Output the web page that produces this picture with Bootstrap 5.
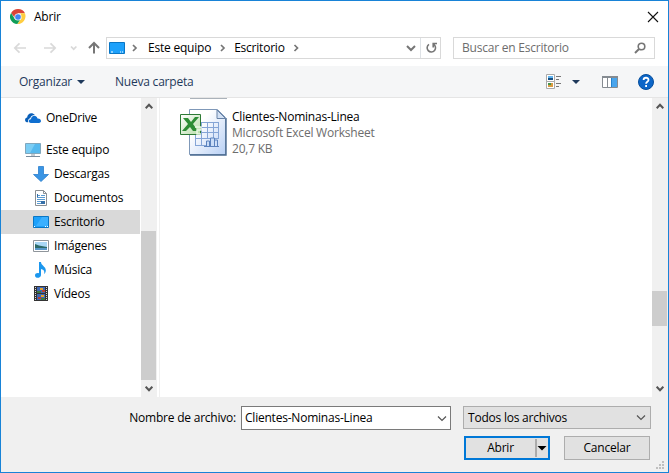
<!DOCTYPE html>
<html lang="es">
<head>
<meta charset="utf-8">
<meta name="viewport" content="width=device-width, initial-scale=1">
<title>Abrir</title>
<link href="https://cdn.jsdelivr.net/npm/bootstrap@5.3.0/dist/css/bootstrap.min.css" rel="stylesheet">
<style>
body{font-family:"Open Sans","Noto Sans",sans-serif;font-size:12px;line-height:16px;letter-spacing:-.22px;color:#000;white-space:nowrap}
svg{display:block;flex:none}
.dialog{width:669px;height:473px;border:1px solid #1883d7;background:#fff}
.titlebar{height:31px;padding:0 9px 0 9px}
.address{height:33px;padding:5px 12px 0 12px}
.box{height:22px;border:1px solid #d9d9d9}
.path-box{width:335px;margin-left:6px}
.search-box{width:202px;margin-left:12px;color:#6d6d6d}
.commands{height:32px;background:#f5f6f7;border-bottom:1px solid #e5e5e5;color:#1e395b;margin-top:1px;padding-left:18px;padding-right:14px}
.panes{height:299px}
.tree{width:140px;padding-top:8px}
.tree-item{height:24px;padding-left:32px;gap:5px}
.tree-item.top{padding-left:24px}
.tree-item.selected{background:#d9d9d9;width:139px}
.scroll{width:16px;background:#f0f0f0}
.thumb{background:#cdcdcd;width:15px}
.arrow{height:17px;padding:5px 0 0 4px}
.files{border-left:1px solid #f0f0f0;margin-left:2px}
.file{margin:10px 0 0 20px;gap:5px}
.above{height:1px;width:37px;margin-left:30px;background:#aab2ba}
.meta{color:#6d6d6d}
.foot{background:#f0f0f0;padding:9px 17px 0 0}
.name-field{width:210px;height:24px;background:#fff;border:1px solid #7a7a7a;margin-left:5px;padding:0 3px}
.type-field{width:188px;height:23px;background:#e1e1e1;border:1px solid #adadad;margin-left:12px;padding:0 4px}
.push{height:24px;width:86px;background:#e1e1e1;border:1px solid #adadad}
.push.main{border:2px solid #0078d7}
.grip{right:3px;bottom:2px}
</style>
</head>
<body>
<div class="dialog d-flex flex-column position-relative overflow-hidden">
  <header class="titlebar d-flex align-items-center">
    <svg width="16" height="16" viewBox="0 0 16 16"><path d="M1.1 4A8 8 0 0 1 15 4.2H8L5 9Z" fill="#db4437"/><path d="M15 4.2A8 8 0 0 1 7.3 15L11.3 9.5 10.5 4.2Z" fill="#ffcd40"/><path d="M1.1 4 5 10.2 10.3 10.6 7.3 15A7.2 7.2 0 0 1 1.1 4Z" fill="#0f9d58"/><circle cx="8" cy="8" r="3.6" fill="#f1f1f1"/><circle cx="8" cy="8" r="2.8" fill="#4285f4"/></svg>
    <span class="t-title ms-1 ps-1">Abrir</span>
    <svg class="ms-auto" width="12" height="12" viewBox="0 0 12 12" stroke="#111" stroke-width="1.1"><path d="M1 1 11 11M11 1 1 11"/></svg>
  </header>

  <div class="address d-flex">
    <svg width="82" height="22" viewBox="0 0 82 22" fill="none"><g stroke="#d9d9d9" stroke-width="1.7"><path d="M13 11H2M6.5 6.3 1.8 11 6.5 15.7M31 11H42M37.5 6.3 42.2 11 37.5 15.7"/><path d="m58 9.5 2.7 2.7 2.7-2.7"/></g><path d="M81 16.5V6M75.8 11.2 81 6 86.2 11.2" stroke="#767676" stroke-width="2" class="d-none"/></svg>
    <svg width="12" height="22" viewBox="0 0 12 22" style="margin-left:-7px" fill="none" stroke="#767676" stroke-width="2"><path d="M6 16.5V6M1 11 6 6 11 11"/></svg>
    <div class="box path-box d-flex align-items-center">
      <svg class="ms-1" style="margin-left:2px!important" width="16" height="12" viewBox="0 0 16 12"><path d="M.5.5h15v11H.5z" fill="#1da1fb" stroke="#0a76c4"/><path d="M2 10h2m7 0h1m1 0h1" stroke="#fff"/></svg>
      <svg class="sep1" width="23" height="10" viewBox="0 0 23 10" fill="none" stroke="#767676" stroke-width="1.7"><path d="m8 2 3 3-3 3"/></svg>
      <span class="t-pc">Este equipo</span>
      <svg width="23" height="10" viewBox="0 0 23 10" fill="none" stroke="#767676" stroke-width="1.7"><path d="m10 2 3 3-3 3"/></svg>
      <span class="t-esc">Escritorio</span>
      <svg width="23" height="10" viewBox="0 0 23 10" fill="none" stroke="#767676" stroke-width="1.7"><path d="m9.500 2 3 3-3 3"/></svg>
      <svg class="ms-auto me-1" width="10" height="8" viewBox="0 0 10 8" fill="none" stroke="#767676" stroke-width="2"><path d="m1 2 4 4 4-4"/></svg>
      <div class="border-start h-100 d-flex align-items-center ps-1"><svg width="15" height="14" viewBox="0 0 15 14" fill="none" stroke="#767676" stroke-width="1.6"><path d="M4 3.300A4.200 4.200 0 1 0 8.500 3.200M8.200 6.500V2.500H12"/></svg></div>
    </div>
    <div class="box search-box d-flex align-items-center ps-2">
      <span class="t-search">Buscar en Escritorio</span>
      <svg class="ms-auto me-2" width="12" height="12" viewBox="0 0 12 12" fill="none" stroke="#767676"><circle cx="7.500" cy="4.500" r="3.300" stroke-width="1.600"/><path d="M5 7 1 11" stroke-width="2"/></svg>
    </div>
  </div>

  <nav class="commands d-flex align-items-center">
    <span class="t-org">Organizar</span>
    <svg class="ms-1" width="10" height="6" viewBox="0 0 10 6"><path d="M1 1h8L5 5Z" fill="#1e395b"/></svg>
    <span class="t-new">Nueva carpeta</span>
    <svg class="ms-auto" width="16" height="16" viewBox="0 0 16 16"><g fill="#fff" stroke="#aaa"><path d="M.5.5h8v7h-8zM.5 7.500h8v7h-8z"/></g><path d="M2 2h5v2H2z" fill="#60b4f0"/><path d="M2 4h5v2H2z" fill="#184f80"/><path d="M2 9h5v4H2z" fill="#d99b41"/><path d="M2 9h3v2H2z" fill="#44944d"/><path d="M10 2.500h5M10 5.500h3M10 9.500h5M10 12.500h3" stroke="#777"/></svg>
    <svg width="10" height="6" viewBox="0 0 10 6" class="view-caret"><path d="M1 1h8L5 5Z" fill="#1e395b"/></svg>
    <svg class="preview" width="16" height="12" viewBox="0 0 16 12"><path d="M.5.5h15v11H.5z" fill="#fff" stroke="#858b91"/><path d="M0 0h16v2H0z" fill="#858b91"/><path d="M5.500 2v9" stroke="#858b91"/><path d="M9 2h6v9H9z" fill="#49a5ec"/><path d="M9.500 2v9" stroke="#2482cf"/></svg>
    <svg class="help" width="16" height="16" viewBox="0 0 16 16"><circle cx="8" cy="8" r="7.500" fill="#0c66c8" stroke="#074f9c"/><path d="M5.600 6C5.600 3 10.500 3 10.500 5.900 10.500 7.800 8.100 7.800 8.100 9.700M8.100 11v1.900" fill="none" stroke="#fff" stroke-width="1.800"/></svg>
  </nav>

  <main class="panes d-flex">
    <div class="tree">
      <div class="tree-item top d-flex align-items-center mb-2">
        <svg width="16" height="16" viewBox="0 0 16 16"><path d="M3.300 12.300C-.8 12.500-.8 8 2.200 7.600 2 3.400 7.200 1.500 9.800 5 7 5 5.500 6.500 5.300 8.300 3.500 8.500 2.500 10.500 3.300 12.300Z" fill="#0a5fb8"/><path d="M6 13C2.500 12.600 3.500 9 6 9.300 6.200 5 11.500 4.500 12.500 8.500 16.700 8.300 17 13 14 13Z" fill="#0f6fd0"/></svg>
        <span class="t-one">OneDrive</span></div>
      <div class="tree-item top d-flex align-items-center">
        <svg width="16" height="16" viewBox="0 0 16 16"><path d="M.5 1.500h15v10H.5z" fill="#55b9ee" stroke="#80a7bd"/><path d="M1 2h9L5 11H1z" fill="#7bcdf4"/><path d="M6 12h4v2H6z" fill="#c4ccd2"/><path d="M1 14.500h14" stroke="#7a8c9c"/></svg>
        <span class="t-pc">Este equipo</span></div>
      <div class="tree-item d-flex align-items-center">
        <svg width="16" height="16" viewBox="0 0 16 16"><path d="M5.500.500h5v8h5L8 15.500.500 8.500h5z" fill="#3a95e4" stroke="#2b7fce" stroke-width=".8"/></svg>
        <span class="t-desc">Descargas</span></div>
      <div class="tree-item d-flex align-items-center">
        <svg width="16" height="16" viewBox="0 0 16 16"><path d="M2.500.500h8l3 3v12h-11z" fill="#fff" stroke="#8a8f94"/><path d="M10.500.500v3h3" fill="none" stroke="#8a8f94"/><path d="M4 5.500h3M4 7.500h8M8 5.500h4M4 9.500h8M4 11.500h4M4 13.500h4" stroke="#5b9bd2"/><path d="M4 4h1v3H4zM8 11h4v3H8z" fill="#356fa8"/></svg>
        <span class="t-doc">Documentos</span></div>
      <div class="tree-item selected d-flex align-items-center">
        <svg width="16" height="12" viewBox="0 0 16 12"><path d="M.5.5h15v11H.5z" fill="#1da1fb" stroke="#0a76c4"/><path d="M9 1h6v9H3z" fill="#3bb0ff"/><path d="M1 10.500h1m10 0h1m1 0h1" stroke="#fff"/></svg>
        <span class="t-esc">Escritorio</span></div>
      <div class="tree-item d-flex align-items-center">
        <svg width="16" height="12" viewBox="0 0 16 12"><path d="M.5.500h15v11H.5z" fill="#fff" stroke="#8f959b"/><path d="M2 2h12v8H2z" fill="#a9d7f5"/><path d="M2 4 6 5.500 14 7V8H2z" fill="#2c6a68"/><path d="M2 8h12v2H2z" fill="#5797c9"/></svg>
        <span class="t-img">Imágenes</span></div>
      <div class="tree-item d-flex align-items-center">
        <svg width="16" height="16" viewBox="0 0 16 16"><path d="M6 0h2C8 3.500 13 4.500 12.800 8.500 12.700 10.500 12 11.500 11 12 12 9 10.500 7.500 8 7V13C8 16.500 2 16.800 2 13.500 2 11.200 4.500 10.600 6 11.300Z" fill="#1c97ee"/></svg>
        <span class="t-mus">Música</span></div>
      <div class="tree-item d-flex align-items-center">
        <svg width="16" height="16" viewBox="0 0 16 16"><path d="M1 0h14v15H1z" fill="#333"/><path d="M2.500 1v14M13.500 1v14" stroke="#ddd" stroke-dasharray="1 1"/><path d="M4 1h8v6H4zM4 8h8v6H4z" fill="#3f67b5"/><path d="M7 2h3v2H7zM8 9h3v2H8z" fill="#e5a32c"/><path d="M9 4h3v2H9zM5 11h3v2H5z" fill="#b93e30"/><path d="M4 5h4v2H4zM8 12h4v2H8z" fill="#3c7842"/></svg>
        <span class="t-vid">Vídeos</span></div>
    </div>
    <div class="scroll d-flex flex-column justify-content-between">
      <div class="arrow"><svg width="8" height="7" viewBox="0 0 8 7" fill="none" stroke="#555" stroke-width="2"><path d="m.7 5.200 3.300-3.500 3.300 3.500"/></svg></div>
      <div class="thumb mt-auto thumb-left"></div>
      <div class="arrow"><svg width="8" height="7" viewBox="0 0 8 7" fill="none" stroke="#555" stroke-width="2"><path d="m.7 1.700 3.300 3.500 3.300-3.500"/></svg></div>
    </div>
    <div class="files flex-grow-1">
      <div class="above"></div>
      <div class="file d-flex">
        <svg width="47" height="47" viewBox="0 0 47 47">
          <defs><linearGradient id="sheet" x2="1" y2="1"><stop offset=".3" stop-color="#fff"/><stop offset="1" stop-color="#b8d0f5"/></linearGradient><linearGradient id="leaf" x2="1" y2="1"><stop stop-color="#fff"/><stop offset="1" stop-color="#b7dda8"/></linearGradient></defs>
          <path d="M9.500.500h28l8 8v37h-36z" fill="url(#sheet)" stroke="#7f98b8"/><path d="M46 9v37H10" fill="none" stroke="#496990" stroke-width="1.400"/><path d="M37 1v8.500h8.500Z" fill="#d3e1f4" stroke="#6983a7"/>
          <path d="M16 13.500h23M16 18.500h23M16 23.500h23M16 29.500h23M15 36.500h11M15.500 22v15M21.500 13v24M27.500 13v17M33.500 13v17M38.500 13v17" fill="none" stroke="#85a5d6"/><path d="M24 37.500h15M26.500 37v-5h3v5M30.500 37v-8h4v8M34.500 31h3v6" fill="#c9dcf7" stroke="#5b82bd"/>
          <path d="M.500 5.500h20v20H.500z" fill="url(#leaf)" stroke="#2d7a35"/><path d="M3 9h5l3 4 4-5h4l-6 7 5 7h-5l-3-4-4 4H2l6-7Z" fill="#2d8d35"/><path d="M15 18h6v3h-4v4h4" fill="none" stroke="#e9f7e4" stroke-width="1.500"/>
        </svg>
        <div><div class="t-file">Clientes-Nominas-Linea</div><div class="meta t-type">Microsoft Excel Worksheet</div><div class="meta t-size">20,7 KB</div></div>
      </div>
    </div>
    <div class="scroll d-flex flex-column">
      <div class="arrow mb-auto"><svg width="8" height="7" viewBox="0 0 8 7" fill="none" stroke="#555" stroke-width="2"><path d="m.7 5.200 3.300-3.500 3.300 3.500"/></svg></div>
      <div class="thumb thumb-right"></div>
      <div class="arrow"><svg width="8" height="7" viewBox="0 0 8 7" fill="none" stroke="#555" stroke-width="2"><path d="m.7 1.700 3.300 3.500 3.300-3.500"/></svg></div>
    </div>
  </main>

  <footer class="foot flex-grow-1">
    <div class="d-flex justify-content-end">
      <label class="t-label pt-1">Nombre de archivo:</label>
      <div class="name-field d-flex align-items-center justify-content-between"><span class="t-file">Clientes-Nominas-Linea</span><svg width="10" height="7" viewBox="0 0 10 7" fill="none" stroke="#555" stroke-width="1.200"><path d="m1 1.500 4 4 4-4"/></svg></div>
      <div class="type-field d-flex align-items-center justify-content-between"><span class="t-all">Todos los archivos</span><svg width="10" height="7" viewBox="0 0 10 7" fill="none" stroke="#555" stroke-width="1.200"><path d="m1 1.500 4 4 4-4"/></svg></div>
    </div>
    <div class="buttons d-flex justify-content-end">
      <div class="push main d-flex align-items-center"><span class="flex-grow-1 text-center t-open">Abrir</span><svg width="13" height="18" viewBox="0 0 13 18"><path d="M1 0v18" stroke="#777"/><path d="M2.500 7h9L7 11.500Z"/></svg></div>
      <div class="push cancel d-flex align-items-center justify-content-center"><span class="t-cancel">Cancelar</span></div>
    </div>
  </footer>
  <svg class="grip position-absolute" width="9" height="9" viewBox="0 0 9 9" fill="#bfbfbf"><path d="M6 0h2v2H6zM3 3h2v2H3zM6 3h2v2H6zM0 6h2v2H0zM3 6h2v2H3zM6 6h2v2H6z"/></svg>
</div>
<style>
.t-new{margin-left:29px}.view-caret{margin-left:9px}.preview{margin-left:21px}.help{margin-left:20px}
.thumb-left{height:149px}.thumb-right{height:35px;margin-bottom:54px}
.buttons{margin-top:6px;padding-right:1px;gap:14px}
</style>
<script src="https://cdn.jsdelivr.net/npm/bootstrap@5.3.0/dist/js/bootstrap.bundle.min.js"></script>
</body>
</html>
